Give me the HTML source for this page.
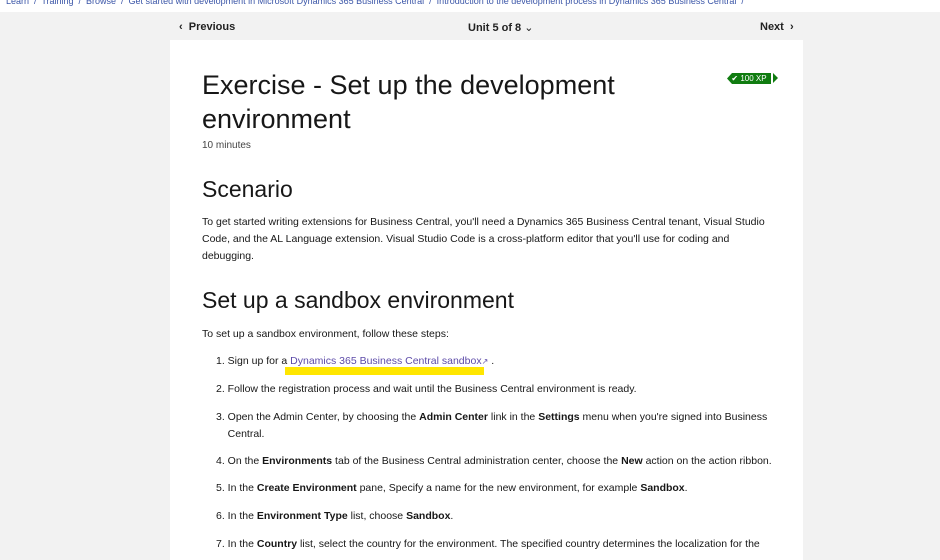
<!DOCTYPE html>
<html><head><style>
body{margin:0;width:940px;height:547px;overflow:hidden;background:#f2f2f2;font-family:"Liberation Sans",sans-serif;color:#171717;position:relative}
.top{position:absolute;left:0;top:0;width:940px;height:12px;background:#fff;overflow:hidden}
.bc{position:absolute;left:6px;top:-4px;font-size:9px;color:#3b56a8;white-space:nowrap}
.nav{position:absolute;top:21px;font-size:11px;font-weight:bold;color:#222}
.card{position:absolute;left:170px;top:40px;width:633px;height:520px;background:#fff}
.a{position:absolute;left:202px;white-space:nowrap}
p.a{margin:0;font-size:10.5px;line-height:17px}
h1{position:absolute;left:202px;top:68px;margin:0;font-size:27px;font-weight:normal;line-height:34px}
h2{position:absolute;left:202px;margin:0;font-size:23px;font-weight:normal}
.li{position:absolute;left:216px;font-size:10.5px;line-height:17px;white-space:nowrap}
b{font-weight:bold}
</style></head><body>
<div class="top"><div class="bc">Learn &nbsp;/&nbsp; Training &nbsp;/&nbsp; Browse &nbsp;/&nbsp; Get started with development in Microsoft Dynamics 365 Business Central &nbsp;/&nbsp; Introduction to the development process in Dynamics 365 Business Central &nbsp;/</div></div>
<div class="nav" style="left:179px">‹&nbsp; Previous</div>
<div class="nav" style="left:468px">Unit 5 of 8 <span style="font-weight:normal">⌄</span></div>
<div class="nav" style="left:760px">Next &nbsp;›</div>
<div class="card"></div>
<div style="position:absolute;left:727px;top:73px;width:44px;height:11px;background:#107c10;color:#fff;font-size:8px;line-height:11px;text-align:center;clip-path:polygon(5px 0,100% 0,100% 100%,5px 100%,0 50%)">✔ 100 XP</div>
<div style="position:absolute;left:773px;top:73px;width:0;height:0;border-top:5.5px solid transparent;border-bottom:5.5px solid transparent;border-left:5px solid #107c10"></div>
<h1>Exercise - Set up the development<br>environment</h1>
<p class="a" style="top:137px;font-size:10px;color:#444">10 minutes</p>
<h2 style="top:176px">Scenario</h2>
<p class="a" style="top:214px;white-space:normal;width:575px">To get started writing extensions for Business Central, you'll need a Dynamics 365 Business Central tenant, Visual Studio Code, and the AL Language extension. Visual Studio Code is a cross-platform editor that you'll use for coding and debugging.</p>
<h2 style="top:287px">Set up a sandbox environment</h2>
<p class="a" style="top:326px">To set up a sandbox environment, follow these steps:</p>
<div style="position:absolute;left:285px;top:367px;width:199px;height:8px;background:#ffe600"></div>
<div class="li" style="top:353px">1. Sign up for a <span style="color:#5c4aa8">Dynamics 365 Business Central sandbox</span><span style="color:#5c4aa8;font-size:8px">↗</span> .</div>
<div class="li" style="top:381px">2. Follow the registration process and wait until the Business Central environment is ready.</div>
<div class="li" style="top:409px">3. Open the Admin Center, by choosing the <b>Admin Center</b> link in the <b>Settings</b> menu when you're signed into Business<br>&nbsp;&nbsp;&nbsp;&nbsp;Central.</div>
<div class="li" style="top:453px">4. On the <b>Environments</b> tab of the Business Central administration center, choose the <b>New</b> action on the action ribbon.</div>
<div class="li" style="top:480px">5. In the <b>Create Environment</b> pane, Specify a name for the new environment, for example <b>Sandbox</b>.</div>
<div class="li" style="top:508px">6. In the <b>Environment Type</b> list, choose <b>Sandbox</b>.</div>
<div class="li" style="top:536px">7. In the <b>Country</b> list, select the country for the environment. The specified country determines the localization for the</div>
</body></html>
